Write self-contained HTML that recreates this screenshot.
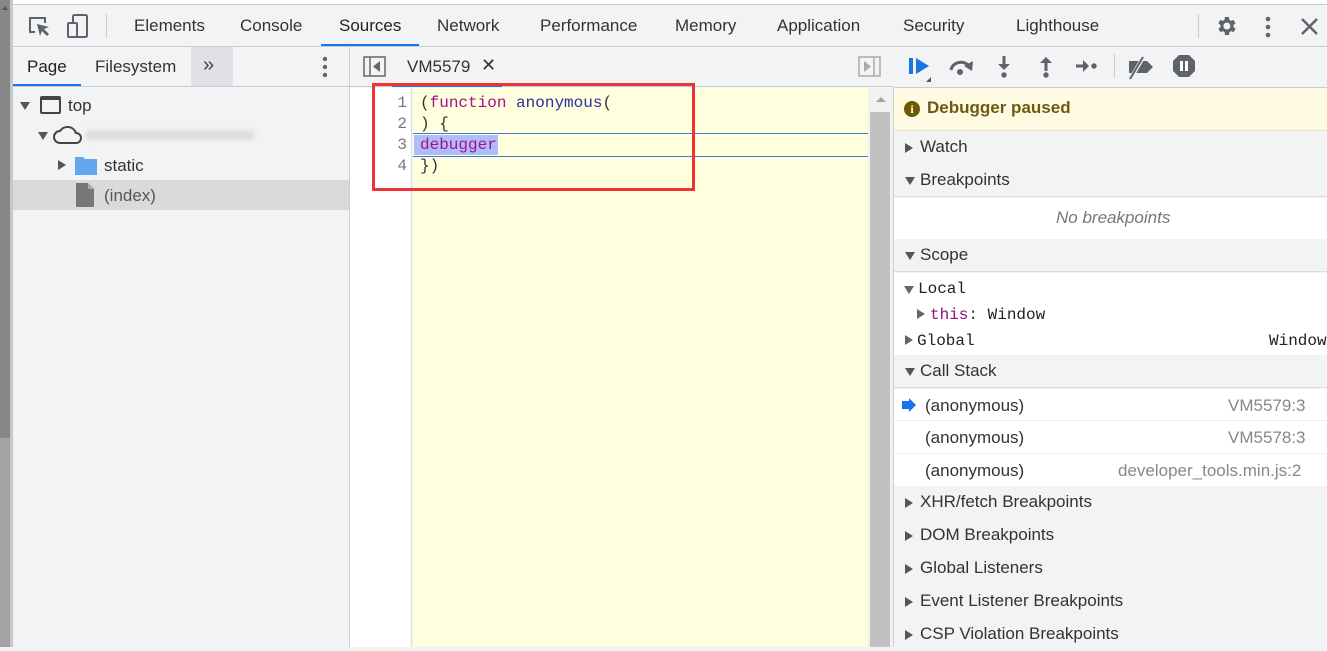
<!DOCTYPE html>
<html><head><meta charset="utf-8"><style>
*{margin:0;padding:0;box-sizing:border-box}
body{width:1327px;height:647px;overflow:hidden;background:#f1f3f4;font-family:"Liberation Sans",sans-serif;font-size:17px;color:#333;position:relative}
.a{position:absolute}
.t{position:absolute;white-space:nowrap}
.mono{font-family:"Liberation Mono","DejaVu Sans Mono",monospace;font-size:16px}
.tri{display:inline-block;width:0;height:0;border-left:5px solid transparent;border-right:5px solid transparent;border-top:8px solid #555}
.trr{display:inline-block;width:0;height:0;border-top:5px solid transparent;border-bottom:5px solid transparent;border-left:8px solid #555}
.sec{position:absolute;left:894px;right:0;height:33px;background:#f1f3f4;border-bottom:1px solid #ddd}
.sec .trr,.sec .tri{position:absolute;left:11px;top:12px}
.sec .tri{top:13px}
.sec span.l{position:absolute;left:26px;top:6px}
</style></head><body>
<div class="a" style="left:0;top:0;width:1327px;height:5px;background:#fff;border-bottom:1px solid #ccc"></div>
<div class="a" style="left:0;top:0;width:10px;height:438px;background:#878787"></div>
<div class="a" style="left:0;top:438px;width:10px;height:209px;background:#a3a3a3"></div>
<div class="a" style="left:10px;top:0;width:3px;height:647px;background:#c8c8c8"></div>
<div class="a" style="left:2px;top:6px;width:0;height:0;border-left:3px solid transparent;border-right:3px solid transparent;border-bottom:4px solid #555"></div>

<!-- main toolbar -->
<div class="a" style="left:13px;top:46px;width:1314px;height:1px;background:#cacdd1"></div>
<svg class="a" style="left:27px;top:15px" width="24" height="24" viewBox="0 0 24 24"><path d="M8 17H3V3h15v5" fill="none" stroke="#5f6368" stroke-width="2"/><path d="M10 9l3 12 2-5 5 5 2-2-5-5 5-2z" fill="#5f6368"/></svg>
<svg class="a" style="left:65px;top:13px" width="26" height="26" viewBox="0 0 26 26"><rect x="8" y="2" width="14" height="22" rx="1.5" fill="none" stroke="#5f6368" stroke-width="2"/><rect x="3" y="10" width="9" height="14" rx="1" fill="#f1f3f4" stroke="#5f6368" stroke-width="2"/></svg>
<div class="a" style="left:106px;top:14px;width:1px;height:24px;background:#ccc"></div>
<div class="t" style="left:134px;top:16px;color:#333">Elements</div>
<div class="t" style="left:240px;top:16px">Console</div>
<div class="t" style="left:339px;top:16px;color:#222">Sources</div>
<div class="a" style="left:321px;top:44px;width:98px;height:2px;background:#1a73e8"></div>
<div class="t" style="left:437px;top:16px">Network</div>
<div class="t" style="left:540px;top:16px">Performance</div>
<div class="t" style="left:675px;top:16px">Memory</div>
<div class="t" style="left:777px;top:16px">Application</div>
<div class="t" style="left:903px;top:16px">Security</div>
<div class="t" style="left:1016px;top:16px">Lighthouse</div>
<div class="a" style="left:1198px;top:14px;width:1px;height:24px;background:#ccc"></div>
<svg class="a" style="left:1214px;top:14px" width="24" height="24" viewBox="0 0 24 24"><path fill="#5f6368" d="M19.4 13a7.5 7.5 0 000-2l2.1-1.6-2-3.5-2.5 1a7 7 0 00-1.7-1L14.9 3h-4l-.4 2.9a7 7 0 00-1.7 1l-2.5-1-2 3.5L6.5 11a7.5 7.5 0 000 2l-2.1 1.6 2 3.5 2.5-1a7 7 0 001.7 1l.4 2.9h4l.4-2.9a7 7 0 001.7-1l2.5 1 2-3.5zM12.9 15.5a3.5 3.5 0 110-7 3.5 3.5 0 010 7z"/></svg>
<svg class="a" style="left:1262px;top:15px" width="12" height="24" viewBox="0 0 12 24"><circle cx="6" cy="4" r="2.3" fill="#5f6368"/><circle cx="6" cy="12" r="2.3" fill="#5f6368"/><circle cx="6" cy="20" r="2.3" fill="#5f6368"/></svg>
<svg class="a" style="left:1300px;top:17px" width="19" height="19" viewBox="0 0 19 19"><path d="M2 2l15 15M17 2L2 17" stroke="#5f6368" stroke-width="2.4"/></svg>

<!-- left panel -->
<div class="a" style="left:13px;top:86px;width:336px;height:1px;background:#cacdd1"></div>
<div class="t" style="left:27px;top:57px;color:#222">Page</div>
<div class="a" style="left:13px;top:84px;width:68px;height:2px;background:#1a73e8"></div>
<div class="t" style="left:95px;top:57px">Filesystem</div>
<div class="a" style="left:191px;top:47px;width:42px;height:39px;background:#dfe1e5"></div>
<div class="t" style="left:203px;top:54px;font-size:20px;color:#444;letter-spacing:-3px">»</div>
<svg class="a" style="left:320px;top:56px" width="10" height="22"><circle cx="5" cy="3" r="2.2" fill="#5f6368"/><circle cx="5" cy="11" r="2.2" fill="#5f6368"/><circle cx="5" cy="19" r="2.2" fill="#5f6368"/></svg>
<div class="a" style="left:349px;top:47px;width:1px;height:600px;background:#cacdd1"></div>
<span class="tri a" style="left:20px;top:102px"></span>
<div class="a" style="left:40px;top:96px;width:21px;height:18px;border:2px solid #444;border-top-width:4px;border-radius:2px"></div>
<div class="t" style="left:68px;top:96px">top</div>
<span class="tri a" style="left:38px;top:132px"></span>
<svg class="a" style="left:52px;top:124px" width="30" height="22" viewBox="0 0 30 22"><path d="M8 19a6 6 0 010-12 9 9 0 0116 2 5 5 0 010 10z" fill="none" stroke="#444" stroke-width="2"/></svg>
<div class="a" style="left:85px;top:130px;width:170px;height:10px;background:#dcdde0;border-radius:5px;filter:blur(2px)"></div>
<span class="trr a" style="left:58px;top:160px"></span>
<svg class="a" style="left:75px;top:155px" width="22" height="20" viewBox="0 0 22 20"><path d="M0 2h8l2 2h12v16H0z" fill="#64a6ee"/></svg>
<div class="t" style="left:104px;top:156px">static</div>
<div class="a" style="left:13px;top:180px;width:336px;height:30px;background:#dadada"></div>
<svg class="a" style="left:76px;top:183px" width="18" height="24" viewBox="0 0 18 24"><path d="M0 0h12l6 6v18H0z" fill="#777"/><path d="M12 0v6h6z" fill="#aaa"/></svg>
<div class="t" style="left:104px;top:186px;color:#555">(index)</div>

<!-- editor -->
<div class="a" style="left:350px;top:47px;width:544px;height:40px;background:#f1f3f4;border-bottom:1px solid #cacdd1"></div>
<svg class="a" style="left:363px;top:56px" width="23" height="21" viewBox="0 0 23 21"><rect x="1" y="1" width="21" height="19" fill="none" stroke="#666" stroke-width="1.5"/><path d="M7 1v19" stroke="#666" stroke-width="1.5"/><path d="M17 5l-7 5.5 7 5.5z" fill="#666"/></svg>
<div class="t" style="left:407px;top:57px">VM5579</div>
<div class="t" style="left:481px;top:55px;font-size:18px">✕</div>
<div class="a" style="left:392px;top:84px;width:110px;height:3px;background:#1a73e8"></div>
<svg class="a" style="left:858px;top:56px" width="23" height="21" viewBox="0 0 23 21"><rect x="1" y="1" width="21" height="19" fill="none" stroke="#aaa" stroke-width="1.5"/><path d="M16 1v19" stroke="#aaa" stroke-width="1.5"/><path d="M6 5l7 5.5-7 5.5z" fill="#aaa"/></svg>
<div class="a" style="left:350px;top:88px;width:62px;height:559px;background:#fff;border-right:1px solid #ddd"></div>
<div class="a" style="left:413px;top:88px;width:455px;height:559px;background:#fffedd"></div>
<div class="a" style="left:868px;top:88px;width:26px;height:559px;background:#f1f1f1;border-right:1px solid #cacdd1"></div>
<div class="a" style="left:870px;top:112px;width:20px;height:535px;background:#c1c1c1"></div>
<div class="a" style="left:876px;top:97px;width:0;height:0;border-left:5px solid transparent;border-right:5px solid transparent;border-bottom:5px solid #a3a3a3"></div>
<div class="a mono" style="left:360px;top:93px;width:47px;text-align:right;color:#777;line-height:21px">1<br>2<br>3<br>4</div>
<div class="a" style="left:413px;top:133px;width:455px;height:1px;background:#3b78e7"></div>
<div class="a" style="left:413px;top:156px;width:455px;height:1px;background:#3b78e7"></div>
<div class="a" style="left:414px;top:135px;width:84px;height:20px;background:#adbdf8"></div>
<div class="a mono" style="left:420px;top:93px;line-height:21px;color:#333;white-space:pre">(<span style="color:#aa0d91">function</span> <span style="color:#1c00cf;color:#2a2fa7">anonymous</span>(
) {
<span style="color:#aa0d91">debugger</span>
})</div>
<div class="a" style="left:372px;top:83px;width:323px;height:108px;border:3px solid #ee3333"></div>

<!-- right panel -->
<div class="a" style="left:894px;top:87px;width:433px;height:1px;background:#cacdd1"></div>
<svg class="a" style="left:906px;top:55px" width="30" height="30" viewBox="0 0 30 30"><rect x="3" y="3" width="4" height="16" fill="#1a73e8"/><path d="M10 3l13 8-13 8z" fill="#1a73e8"/><path d="M25 22v5h-5z" fill="#555"/></svg>
<svg class="a" style="left:948px;top:56px" width="28" height="22" viewBox="0 0 28 22"><path d="M3 14a10 9 0 0118-4" fill="none" stroke="#5f6368" stroke-width="3"/><path d="M25 5l-1 10-8-5z" fill="#5f6368"/><circle cx="12" cy="16" r="3" fill="#5f6368"/></svg>
<svg class="a" style="left:995px;top:55px" width="18" height="24" viewBox="0 0 18 24"><path d="M9 1v11" stroke="#5f6368" stroke-width="3"/><path d="M3 9h12l-6 6z" fill="#5f6368"/><circle cx="9" cy="20" r="2.7" fill="#5f6368"/></svg>
<svg class="a" style="left:1037px;top:55px" width="18" height="24" viewBox="0 0 18 24"><path d="M9 6v10" stroke="#5f6368" stroke-width="3"/><path d="M3 8h12l-6-6z" fill="#5f6368"/><circle cx="9" cy="20" r="2.7" fill="#5f6368"/></svg>
<svg class="a" style="left:1075px;top:57px" width="24" height="18" viewBox="0 0 24 18"><path d="M1 9h9" stroke="#5f6368" stroke-width="3"/><path d="M8 3v12l6-6z" fill="#5f6368"/><circle cx="19" cy="9" r="2.7" fill="#5f6368"/></svg>
<div class="a" style="left:1114px;top:54px;width:1px;height:24px;background:#ccc"></div>
<svg class="a" style="left:1126px;top:54px" width="30" height="26" viewBox="0 0 30 26"><path d="M3 7h18l6 6-6 6H3z" fill="#5f6368"/><path d="M5 24L18 2" stroke="#f1f3f4" stroke-width="4"/><path d="M4 25L17 3" stroke="#5f6368" stroke-width="2"/></svg>
<svg class="a" style="left:1172px;top:54px" width="24" height="24" viewBox="0 0 24 24"><path d="M7 1h10l6 6v10l-6 6H7l-6-6V7z" fill="#5f6368"/><rect x="8" y="7" width="3" height="10" fill="#fff"/><rect x="13" y="7" width="3" height="10" fill="#fff"/></svg>

<div class="a" style="left:894px;top:88px;width:433px;height:43px;background:#fffbe3;border-bottom:1px solid #e8e2c0"></div>
<div class="a" style="left:904px;top:101px;width:16px;height:16px;border-radius:50%;background:#6b5b00;color:#fffbe3;font-size:12px;font-weight:bold;text-align:center;line-height:16px;font-family:'Liberation Serif',serif">i</div>
<div class="t" style="left:927px;top:98px;font-weight:bold;color:#6b5b12">Debugger paused</div>

<div class="sec" style="top:131px;border-bottom:none"><span class="trr"></span><span class="l">Watch</span></div>
<div class="sec" style="top:164px"><span class="tri"></span><span class="l">Breakpoints</span></div>
<div class="a" style="left:894px;top:198px;width:433px;height:41px;background:#fff"></div>
<div class="t" style="left:1056px;top:208px;font-style:italic;color:#777">No breakpoints</div>
<div class="sec" style="top:239px"><span class="tri"></span><span class="l">Scope</span></div>
<div class="a" style="left:894px;top:273px;width:433px;height:82px;background:#fff"></div>
<span class="tri a" style="left:904px;top:286px;border-top-color:#666"></span>
<div class="t mono" style="left:918px;top:280px;color:#222">Local</div>
<span class="trr a" style="left:917px;top:309px;border-left-color:#666"></span>
<div class="t mono" style="left:930px;top:306px"><span style="color:#881280">this</span>: <span style="color:#222">Window</span></div>
<span class="trr a" style="left:905px;top:335px;border-left-color:#666"></span>
<div class="t mono" style="left:917px;top:332px;color:#222">Global</div>
<div class="t mono" style="left:1269px;top:332px;color:#222">Window</div>
<div class="sec" style="top:355px"><span class="tri"></span><span class="l">Call Stack</span></div>
<div class="a" style="left:894px;top:389px;width:433px;height:99px;background:#fff"></div>
<div class="a" style="left:894px;top:420px;width:433px;height:1px;background:#eee"></div>
<div class="a" style="left:894px;top:453px;width:433px;height:1px;background:#eee"></div>
<svg class="a" style="left:902px;top:398px" width="14" height="14" viewBox="0 0 14 14"><path d="M0 3h7V0l7 7-7 7v-3H0z" fill="#1a73e8"/></svg>
<div class="t" style="left:925px;top:396px">(anonymous)</div><div class="t" style="left:1228px;top:396px;color:#888">VM5579:3</div>
<div class="t" style="left:925px;top:428px">(anonymous)</div><div class="t" style="left:1228px;top:428px;color:#888">VM5578:3</div>
<div class="t" style="left:925px;top:461px">(anonymous)</div><div class="t" style="left:1118px;top:461px;color:#888">developer_tools.min.js:2</div>
<div class="sec" style="top:486px;border:none"><span class="trr"></span><span class="l">XHR/fetch Breakpoints</span></div>
<div class="sec" style="top:519px;border:none"><span class="trr"></span><span class="l">DOM Breakpoints</span></div>
<div class="sec" style="top:552px;border:none"><span class="trr"></span><span class="l">Global Listeners</span></div>
<div class="sec" style="top:585px;border:none"><span class="trr"></span><span class="l">Event Listener Breakpoints</span></div>
<div class="sec" style="top:618px;border:none"><span class="trr"></span><span class="l">CSP Violation Breakpoints</span></div>
</body></html>
